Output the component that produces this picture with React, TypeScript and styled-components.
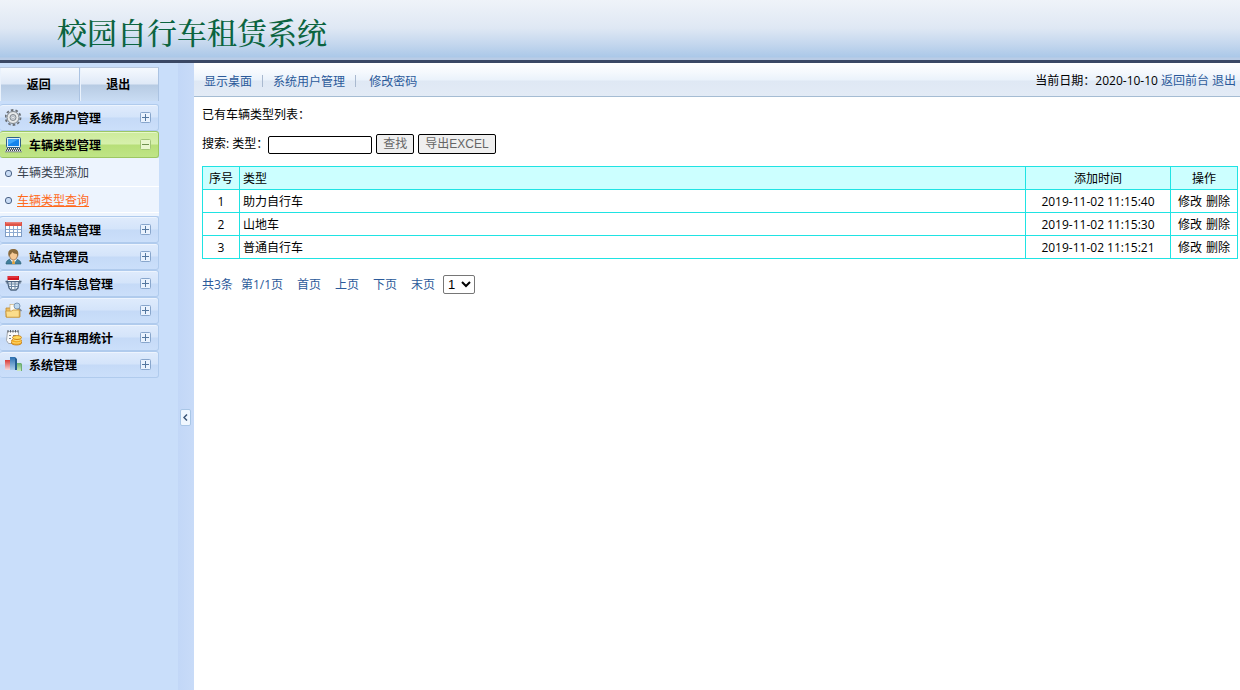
import React from 'react';
import styled, { createGlobalStyle } from 'styled-components';

const GlobalStyle = createGlobalStyle`
  *, *::before, *::after { box-sizing: border-box; }
  body {
    margin: 0;
    background: #fff;
    color: #000;
    font: 12px/18px "Open Sans", "Noto Sans CJK SC", sans-serif;
  }
  a { color: inherit; text-decoration: none; }
  h1, p, ul { margin: 0; padding: 0; }
  ul { list-style: none; }
`;

const Page = styled.div`
  display: flex;
  flex-direction: column;
  min-height: 100vh;
`;

const Header = styled.header`
  display: flex;
  align-items: center;
  height: 63px;
  padding: 0 57px;
  border-bottom: 3px solid #3a4865;
  background: linear-gradient(#eff3f9 0, #dfe8f4 28px, #c4d7ee 44px, #abc8e8 57px, #b9cce6 58px);
`;

const Title = styled.h1`
  padding-top: 2px;
  font: 500 30px/40px "Noto Serif CJK SC", "Noto Sans CJK SC", serif;
  color: #0b6440;
`;

const Body = styled.div`
  display: flex;
  flex: 1;
`;

const Sidebar = styled.aside`
  flex: none;
  width: 178px;
  padding: 4px 19px 0 0;
  background: #c9defa;
`;

const SideActions = styled.div`
  display: flex;
  height: 34px;
  margin-bottom: 3px;
`;

const SideButton = styled.button`
  flex: 1;
  padding: 0 1px 1px 0;
  border: 0;
  border-top: 1px solid #b9c9df;
  border-right: 1px solid #abc3e2;
  background: linear-gradient(#f5f9fe 0, #dfe9f7 16px, #b7cbe3 17px, #c9dcf3 100%);
  box-shadow: inset 1px 0 0 #eaf2fc;
  color: #000;
  font: 700 12px/18px "Noto Sans CJK SC", sans-serif;
  cursor: pointer;
`;

const MenuHead = styled.button<{ $open?: boolean }>`
  display: flex;
  align-items: center;
  gap: 6px;
  width: 100%;
  height: 27px;
  padding: 0 7px 0 5px;
  border: 1px solid ${(p) => (p.$open ? '#9cc763' : '#b0cbed')};
  border-left: 0;
  border-radius: 3px;
  background: ${(p) =>
    p.$open
      ? 'linear-gradient(#cdeb9b 0, #d6f0ac 12px, #b7df78 13px, #bfe587 100%)'
      : 'linear-gradient(#dfebfc 0, #d4e4fa 12px, #c5daf7 13px, #cbdffa 100%)'};
  box-shadow: inset 0 1px 0 ${(p) => (p.$open ? '#e6f8c8' : '#edf4fe')};
  color: #000;
  font: 700 12px/18px "Noto Sans CJK SC", sans-serif;
  text-align: left;
  cursor: pointer;
`;

const MenuLabel = styled.span`
  flex: 1;
`;

const MenuIcon = styled.svg`
  flex: none;
  width: 18px;
  height: 18px;
`;

const Toggle = styled.svg`
  flex: none;
  width: 11px;
  height: 11px;
`;

const SubMenu = styled.ul`
  padding-bottom: 3px;
  background: #edf4fe;
`;

const SubItem = styled.li`
  display: flex;
  align-items: center;
  gap: 5px;
  height: 29px;
  padding: 2px 0 0 5px;
  border-bottom: 1px solid #fff;
  & + & { height: 26px; }
`;

const Bullet = styled.span`
  width: 7px;
  height: 7px;
  border: 1px solid #4b6285;
  border-radius: 3px;
  background: #c9dcf5;
`;

const SubLink = styled.a<{ $current?: boolean }>`
  color: ${(p) => (p.$current ? '#ff6a1c' : '#39424e')};
  text-decoration: ${(p) => (p.$current ? 'underline' : 'none')};
`;

const Splitter = styled.div`
  flex: none;
  width: 16px;
  padding: 346px 3px 0 2px;
  background: linear-gradient(90deg, #c2d7f7, #c8dbf8);
`;

const CollapseButton = styled.button`
  display: flex;
  align-items: center;
  justify-content: center;
  width: 11px;
  height: 17px;
  padding: 0;
  border: 1px solid #a9c6e6;
  border-radius: 2px;
  background: #f0f7ff;
  cursor: pointer;
`;

const Main = styled.main`
  flex: 1;
  min-width: 0;
`;

const TopBar = styled.div`
  display: flex;
  align-items: center;
  justify-content: space-between;
  height: 34px;
  padding: 5px 4px 0 10px;
  border-bottom: 1px solid #a5bcd3;
  background: linear-gradient(#fff 0, #f4f8fd 10px, #eaf2fb 17px, #dfe8f4 18px, #e3ebf6 100%);
`;

const TopNav = styled.nav`
  display: flex;
  align-items: center;
  gap: 10px;
  color: #2b5a9a;
`;

const Divider = styled.span`
  width: 1px;
  height: 12px;
  margin-bottom: 2px;
  background: #a9b9cf;
`;

const DateLine = styled.div`
  display: flex;
  gap: 3px;
  padding-bottom: 2px;
  a { color: #2b5a9a; }
`;

const Content = styled.section`
  padding: 9px 2px 0 8px;
`;

const SearchForm = styled.form`
  display: flex;
  align-items: center;
  gap: 4px;
  height: 22px;
  margin: 9px 0 11px;
`;

const SearchLabel = styled.label`
  margin-right: -4px;
  white-space: pre;
`;

const SearchInput = styled.input`
  width: 104px;
  height: 18px;
  margin-top: 2px;
  padding: 0 3px;
  border: 1px solid #000;
  border-radius: 2px;
  font: 12px/16px "Liberation Sans", "Noto Sans CJK SC", sans-serif;
`;

const FormButton = styled.button`
  height: 20px;
  padding: 0 6px;
  border: 1px solid #000;
  border-radius: 2px;
  background: #efefef;
  color: #666;
  font: 12px/18px "Liberation Sans", "Noto Sans CJK SC", sans-serif;
`;

const DataTable = styled.table`
  width: 100%;
  border-collapse: collapse;
  table-layout: fixed;
  th, td {
    height: 23px;
    padding: 1px 3px 0;
    border: 1px solid #1fe3e3;
    font-weight: 400;
    text-align: center;
    white-space: nowrap;
  }
  th { background: #ccffff; }
`;

const Column = styled.col<{ $width?: number }>`
  width: ${(p) => (p.$width ? `${p.$width}px` : 'auto')};
`;

const TypeHead = styled.th`
  && { text-align: left; }
`;

const TypeCell = styled.td`
  && { text-align: left; }
`;

const Actions = styled.div`
  display: flex;
  justify-content: center;
  gap: 4px;
`;

const Pager = styled.div`
  display: flex;
  align-items: center;
  gap: 14px;
  margin-top: 16px;
  color: #2b5a9a;
`;

const PagerGroup = styled.div`
  display: flex;
  align-items: center;
  gap: 8px;
`;

const PageSelect = styled.select`
  width: 32px;
  height: 19px;
  padding: 0;
  border: 1px solid #767676;
  border-radius: 2px;
  background-color: #fff;
  color: #000;
  font: 13px/16px "Liberation Sans", sans-serif;
`;

const icons: Record<string, React.ReactNode> = {
  gear: (
    <>
      <circle cx="8" cy="8.500" r="7.500" fill="none" stroke="#6b7076" strokeWidth="1.800" strokeDasharray="2.600 2.100" />
      <circle cx="8" cy="8.500" r="6" fill="#e6e8e9" stroke="#7c8288" />
      <circle cx="8" cy="8.500" r="3" fill="#cfd6de" stroke="#80868c" />
      <circle cx="8" cy="8.500" r="1.200" fill="#f6f8fa" stroke="#9aa0a6" strokeWidth=".6" />
    </>
  ),
  computer: (
    <>
      <rect x="1.500" y="1.500" width="14" height="10" rx="1" fill="#dfeef6" stroke="#315f87" />
      <rect x="3" y="3" width="11" height="7" fill="#1583ec" />
      <path d="M3 3h11L3 9z" fill="#3fa6fb" />
      <path d="M2 12h13l2 4H0z" fill="#f4f6f8" />
      <path d="M2 12.500h13M1 14.500h15" stroke="#39434c" strokeDasharray="1 1" />
      <path d="M1 13.500h15M0 15.800h17" stroke="#59646e" strokeWidth=".8" />
    </>
  ),
  calendar: (
    <>
      <rect x=".5" y="1.500" width="16" height="14" fill="#fff" stroke="#7f9cc4" />
      <rect y="1" width="17" height="4" fill="#df5347" />
      <path d="M1 1.800h15" stroke="#f2958d" />
      <path d="M1 8.500h15M1 11.500h15M4.500 5v10M8.500 5v10M12.500 5v10" stroke="#8eabd1" />
    </>
  ),
  user: (
    <>
      <path d="M1 16c0-3 2-4 4-5h6c3 1 5 2 5 5z" fill="#3f7f9c" stroke="#2c6175" strokeWidth=".7" />
      <path d="M5 11l3.500 5 3.500-5z" fill="#fff" />
      <path d="M7.500 12.500h2l.5 3.500H7z" fill="#e2a23c" />
      <ellipse cx="8.500" cy="7" rx="4" ry="5" fill="#f6c995" stroke="#8b5a32" strokeWidth=".7" />
      <path d="M4 9C2 4 4 1 8 1c5 0 6 3 5 8l-1-3C10 6 8 5 7 4 7 6 5 6 4.800 7z" fill="#8a6a3c" />
    </>
  ),
  basket: (
    <>
      <path d="M.5 6.500h16M1.500 8h1M14.500 8h1" stroke="#55687e" strokeWidth="1.400" />
      <path d="M2.500 6.500h11.500l-1 6.500-2 2h-5l-2-2z" fill="#f2f7fb" stroke="#4d6580" strokeWidth="1.300" />
      <path d="M3 9h11M4 11.500h9M6.500 7v7M10 7v7" stroke="#6b86a3" />
      <rect x="2.500" y="1" width="11.500" height="4" fill="#d5141e" />
      <path d="M3 2h10" stroke="#e8545a" />
      <path d="M3 5.500h11" stroke="#fff" />
    </>
  ),
  folder: (
    <>
      <path d="M1 6h5l1 1h8v8H1z" fill="#eec063" stroke="#bf8b2d" strokeWidth=".8" />
      <rect x="5" y="2.500" width="7" height="7" fill="#fdfbf2" stroke="#c8a768" strokeWidth=".6" />
      <path d="M.8 9h6l1-1h6.500v7.200H1.500z" fill="#fbdd8b" stroke="#c89639" strokeWidth=".8" />
      <circle cx="12" cy="4" r="3" fill="#bcd8f0" stroke="#7b98b6" />
      <path d="M14 6.500l2.500 2.500" stroke="#7f8b98" strokeWidth="1.500" />
    </>
  ),
  notes: (
    <>
      <path d="M2.500 2.500h11v9l-3 3h-7l-2-3z" fill="#f9f9f9" stroke="#a2a8af" />
      <path d="M3 1v2.500M5.500 1v2.500M8 1v2.500M10.500 1v2.500M13 1v2.500" stroke="#555d67" />
      <path d="M4 6.500h2M4 9.500h2M8 6.500h3" stroke="#7a838c" />
      <path d="M6.500 12c0-1 1-2 3-2h5c1 0 2 1 2 2v2c0 1-2 2-5 2s-5-1-5-2z" fill="#f3ac22" stroke="#c37914" strokeWidth=".8" />
      <ellipse cx="12" cy="8.500" rx="4.500" ry="2" fill="#ffd95c" stroke="#c37914" strokeWidth=".8" />
      <path d="M6.500 12.500c2 2 8 2 10 0M8 10.500c2 1.500 6 1.500 8.500 0" fill="none" stroke="#ffe792" strokeWidth=".8" />
    </>
  ),
  chart: (
    <>
      <defs>
        <linearGradient id="barRed" x2="0" y2="1"><stop stopColor="#d93a36" /><stop offset="1" stopColor="#f6dadd" /></linearGradient>
        <linearGradient id="barBlue" x2="0" y2="1"><stop stopColor="#2c6fb0" /><stop offset="1" stopColor="#a9cdec" /></linearGradient>
        <linearGradient id="barGreen" x2="0" y2="1"><stop stopColor="#63ad6a" /><stop offset="1" stopColor="#cfeac0" /></linearGradient>
      </defs>
      <rect x="0" y="4" width="5" height="10" fill="url(#barRed)" />
      <rect x="5" y="1" width="5" height="13" fill="url(#barBlue)" />
      <path d="M10 1l2 2v11h-2z" fill="#235d92" />
      <rect x="12" y="7" width="4" height="8" fill="url(#barGreen)" />
      <path d="M16 7l1 1v7h-1z" fill="#6fae72" />
    </>
  ),
};

const menuTop = [{ icon: 'gear', label: '系统用户管理' }];
const menuBottom = [
  { icon: 'calendar', label: '租赁站点管理' },
  { icon: 'user', label: '站点管理员' },
  { icon: 'basket', label: '自行车信息管理' },
  { icon: 'folder', label: '校园新闻' },
  { icon: 'notes', label: '自行车租用统计' },
  { icon: 'chart', label: '系统管理' },
];

const rows = [
  { id: 1, type: '助力自行车', time: '2019-11-02 11:15:40' },
  { id: 2, type: '山地车', time: '2019-11-02 11:15:30' },
  { id: 3, type: '普通自行车', time: '2019-11-02 11:15:21' },
];

function MenuEntry({ icon, label, open }: { icon: string; label: string; open?: boolean }) {
  return (
    <MenuHead type="button" $open={open} aria-expanded={!!open}>
      <MenuIcon viewBox="0 0 18 18" aria-hidden="true">{icons[icon]}</MenuIcon>
      <MenuLabel>{label}</MenuLabel>
      <Toggle viewBox="0 0 11 11" aria-hidden="true">
        <rect x=".5" y=".5" width="10" height="10" rx="1" fill={open ? '#e9f7d0' : '#e9f2fe'} stroke={open ? '#a3c678' : '#88a6cc'} />
        <path d={open ? 'M2 5.500h7' : 'M2 5.500h7M5.500 2v7'} stroke={open ? '#6f9251' : '#54779f'} />
      </Toggle>
    </MenuHead>
  );
}

export default function App() {
  return (
    <Page>
      <GlobalStyle />
      <Header>
        <Title>校园自行车租赁系统</Title>
      </Header>
      <Body>
        <Sidebar>
          <SideActions>
            <SideButton type="button">返回</SideButton>
            <SideButton type="button">退出</SideButton>
          </SideActions>
          {menuTop.map((m) => <MenuEntry key={m.label} {...m} />)}
          <MenuEntry icon="computer" label="车辆类型管理" open />
          <SubMenu>
            <SubItem><Bullet /><SubLink href="#add">车辆类型添加</SubLink></SubItem>
            <SubItem><Bullet /><SubLink href="#query" $current>车辆类型查询</SubLink></SubItem>
          </SubMenu>
          {menuBottom.map((m) => <MenuEntry key={m.label} {...m} />)}
        </Sidebar>
        <Splitter>
          <CollapseButton type="button" aria-label="收起">
            <svg width="5" height="7" viewBox="0 0 5 7" aria-hidden="true">
              <path d="M4 .5L1 3.500l3 3" fill="none" stroke="#3c5678" strokeWidth="1.500" />
            </svg>
          </CollapseButton>
        </Splitter>
        <Main>
          <TopBar>
            <TopNav>
              <a href="#desktop">显示桌面</a>
              <Divider />
              <a href="#users">系统用户管理</a>
              <Divider />
              <a href="#password">&nbsp;修改密码</a>
            </TopNav>
            <DateLine>
              <span>当前日期：2020-10-10</span>
              <a href="#front">返回前台</a>
              <a href="#logout">退出</a>
            </DateLine>
          </TopBar>
          <Content>
            <p>已有车辆类型列表：</p>
            <SearchForm onSubmit={(e) => e.preventDefault()}>
              <SearchLabel htmlFor="type">搜索: 类型：</SearchLabel>
              <SearchInput id="type" type="text" />
              <FormButton type="submit">查找</FormButton>
              <FormButton type="button">导出EXCEL</FormButton>
            </SearchForm>
            <DataTable>
              <colgroup>
                <Column $width={37} />
                <Column />
                <Column $width={145} />
                <Column $width={67} />
              </colgroup>
              <thead>
                <tr>
                  <th>序号</th>
                  <TypeHead>类型</TypeHead>
                  <th>添加时间</th>
                  <th>操作</th>
                </tr>
              </thead>
              <tbody>
                {rows.map((r) => (
                  <tr key={r.id}>
                    <td>{r.id}</td>
                    <TypeCell>{r.type}</TypeCell>
                    <td>{r.time}</td>
                    <td>
                      <Actions>
                        <a href="#edit">修改</a>
                        <a href="#delete">删除</a>
                      </Actions>
                    </td>
                  </tr>
                ))}
              </tbody>
            </DataTable>
            <Pager>
              <PagerGroup>
                <span>共3条</span>
                <span>第1/1页</span>
              </PagerGroup>
              <a href="#first">首页</a>
              <a href="#prev">上页</a>
              <a href="#next">下页</a>
              <PagerGroup>
                <a href="#last">末页</a>
                <PageSelect aria-label="页码" defaultValue="1">
                  <option value="1">1</option>
                </PageSelect>
              </PagerGroup>
            </Pager>
          </Content>
        </Main>
      </Body>
    </Page>
  );
}
